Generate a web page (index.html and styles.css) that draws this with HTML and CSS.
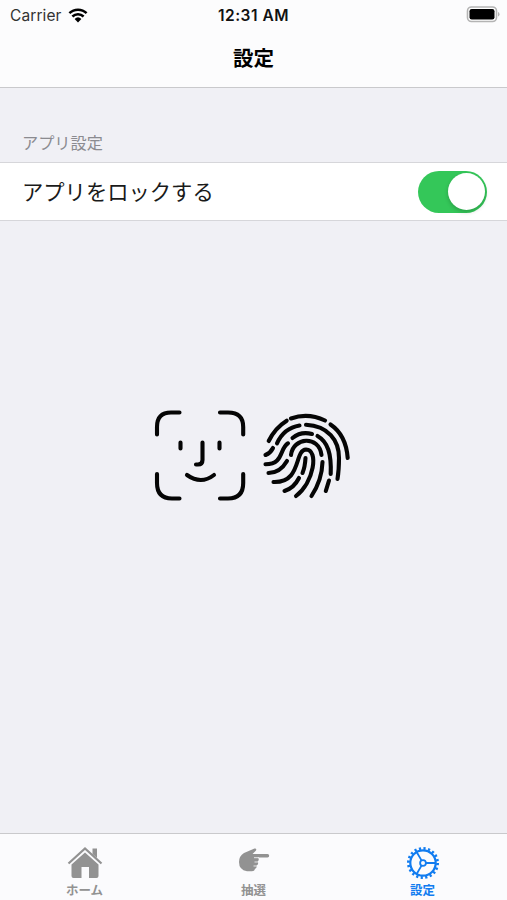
FILE: index.html
```html
<!DOCTYPE html>
<html lang="ja">
<head>
    <meta charset="UTF-8">
    <meta name="viewport" content="width=device-width, initial-scale=1.0">
    <title>設定</title>
    <link rel="stylesheet" href="styles.css">
</head>
<body>
    <header class="header">
        <div class="status-bar">
            <div class="carrier">
                <span>Carrier</span>
                <svg class="wifi" viewBox="0 0 20 15">
                    <path d="M1.4 5.2a12.4 12.4 0 0 1 17.2 0M4.4 8.5a8 8 0 0 1 11.2 0" fill="none" stroke="#000" stroke-width="2.5"/>
                    <path d="M6.6 10.9a5 5 0 0 1 6.8 0L10 14.4z"/>
                </svg>
            </div>
            <div class="time">12:31 AM</div>
            <svg class="battery" viewBox="0 0 34 17">
                <rect x="1.5" y="1" width="29" height="14.5" rx="4" fill="#fff" stroke="#b4b4b4" stroke-width="1.6"/>
                <rect x="3.5" y="3" width="25" height="10.5" rx="2.2"/>
                <path d="M32 6v4.5q1.5-.6 1.5-2.25t-1.5-2.25" fill="#b4b4b4"/>
            </svg>
        </div>
        <h1 class="title">設定</h1>
    </header>

    <main class="content">
        <h2 class="section-title">アプリ設定</h2>
        <div class="row">
            <span class="row-label">アプリをロックする</span>
            <div class="toggle"><div class="knob"></div></div>
        </div>

        <div class="biometrics">
            <svg class="face" viewBox="0 0 92 92">
                <path d="M3 24.5V17Q3 2.5 17 2.5h8.5M66 2.5h8q15.200 0 15.200 14.5v7.5M3 64v9q0 15.5 15 15.5h7.5M66 88.5h8q15.200 0 15.200-15.5v-9"/>
                <path d="M26.5 32.5v6M65.5 32.5v6M48.5 32.5V50q0 4.5-4.5 4.5h-2M33 65q14 10 27 0"/>
            </svg>
            <svg class="finger" viewBox="262 412 90 88">
                <path d="M268.7 441Q275 428 286.7 420.7"/>
                <path d="M291 418.5Q308 412.5 325 420.5"/>
                <path d="M330.5 424.5Q346 435 347.7 458"/>
                <path d="M277 443.3Q284 428 299.5 425.5"/>
                <path d="M306 424.8C328 426 339 440 339 458Q339 470 337.5 479"/>
                <path d="M292.5 438Q301 431 312 434"/>
                <path d="M317.5 436C328 442 331.5 454 330.7 474"/>
                <path d="M273 448Q270.5 453 265.5 455"/>
                <path d="M265.5 464.3C284 464 279 449 288 443.3"/>
                <path d="M268.5 473Q280 473 287 461"/>
                <path d="M291 455C293 437 319 435 321.5 455"/>
                <path d="M273.5 482C302 483 294 450 306 449.5C319 450 314 482 296 496"/>
                <path d="M284.5 491Q294 488 299 478"/>
                <path d="M305.5 458Q305 467 302.5 473"/>
                <path d="M322.5 462Q322 480 311.5 496"/>
                <path d="M329 480.5L325.8 491"/>
            </svg>
        </div>
    </main>

    <nav class="tab-bar">
        <a class="tab">
            <svg class="tab-icon" viewBox="0 0 36 34">
                <path d="M1.5 18.5L18 3.5l16.5 15" fill="none" stroke="currentColor" stroke-width="2.2"/>
                <path d="M25.5 3.5h4.5v9.5l-4.5-4zM4.5 19.5L18 7.5l13.5 12V31q0 2-2 2H22V22h-7.5v11h-8q-2 0-2-2z" fill="currentColor"/>
            </svg>
            <span>ホーム</span>
        </a>
        <a class="tab">
            <svg class="tab-icon" viewBox="0 0 36 34">
                <path d="M3 17Q3 11 8 8l10.5-4.5q2.5-.3 1.5 2L16.5 9h15q1.700.2 1.700 1.700t-1.700 1.800H22q1.700 2.5-.3 4 1.300 2.5-1 4 .5 2.5-1.700 3.500-.5 2.200-3 2.200H11Q3 25 3 17z" fill="currentColor"/>
                <path d="M18 12.7h5M18.5 17h3.5M17.5 21h3.5" fill="none" stroke="#fbfbfd" stroke-width=".8"/>
            </svg>
            <span>抽選</span>
        </a>
        <a class="tab active">
            <svg class="tab-icon" viewBox="0 0 36 34">
                <g fill="none" stroke="currentColor">
                    <circle cx="18" cy="18" r="12.7" stroke-width="2.2"/>
                    <circle cx="18" cy="18" r="14.6" stroke-width="2.8" stroke-dasharray="2.2 2.387"/>
                    <circle cx="18" cy="18" r="2.9" stroke-width="1.8"/>
                    <path d="M21 18h10M16.500 15.400l-5-8.700M16.500 20.600l-5 8.700" stroke-width="1.8"/>
                </g>
            </svg>
            <span>設定</span>
        </a>
    </nav>
</body>
</html>
```

FILE: styles.css
```css
* {
    box-sizing: border-box;
}
body {
    margin: 0;
    height: 900px;
    display: flex;
    flex-direction: column;
    overflow: hidden;
    background: #f0f0f5;
    color: #000;
    font-family: Inter, "Noto Sans CJK JP", sans-serif;
}
.header {
    height: 88px;
    background: #fcfcfd;
    border-bottom: 1px solid #c9c9cc;
}
.status-bar {
    display: grid;
    grid-template-columns: 1fr auto 1fr;
    align-items: center;
    height: 30px;
    padding: 0 7px 0 10px;
    font-size: 15.5px;
}
.carrier {
    display: flex;
    align-items: center;
    gap: 6px;
    color: #333;
    letter-spacing: 0.1px;
}
.wifi {
    width: 20px;
    height: 15px;
}
.time {
    margin-right: 3px;
    font-weight: 600;
    letter-spacing: 0.5px;
    color: #111;
}
.battery {
    width: 34px;
    height: 17px;
    margin-bottom: 2px;
    justify-self: end;
}
.title {
    margin: 14px 0 0;
    font-size: 20.5px;
    line-height: 30px;
    font-weight: 700;
    text-align: center;
}
.content {
    flex: 1;
}
.section-title {
    margin: 0;
    padding: 43px 22px 7px;
    font-size: 16.2px;
    line-height: 24px;
    font-weight: 400;
    color: #8b8b90;
}
.row {
    display: flex;
    align-items: center;
    justify-content: space-between;
    height: 59px;
    padding: 0 20px 0 22px;
    background: #fff;
    border-top: 1px solid #d6d6da;
    border-bottom: 1px solid #d6d6da;
}
.row-label {
    margin-bottom: 2px;
    font-size: 21.3px;
    color: #1a1a1a;
}
.toggle {
    display: flex;
    justify-content: flex-end;
    width: 69px;
    height: 42px;
    padding: 2.5px;
    border-radius: 21px;
    background: #34c759;
}
.knob {
    width: 37px;
    height: 37px;
    border-radius: 50%;
    background: #fff;
    box-shadow: 0 2px 4px rgba(0, 0, 0, 0.2);
}
.biometrics {
    display: flex;
    gap: 16px;
    padding: 189px 0 0 154px;
}
.biometrics svg {
    fill: none;
    stroke: #050505;
    stroke-width: 4.1;
    stroke-linecap: round;
    stroke-linejoin: round;
}
.face {
    width: 92px;
    height: 92px;
}
.finger {
    width: 90px;
    height: 88px;
    margin-top: 2px;
}
.tab-bar {
    display: flex;
    height: 67px;
    background: #fbfbfd;
    border-top: 1px solid #c9c9cc;
}
.tab {
    flex: 1;
    display: flex;
    flex-direction: column;
    align-items: center;
    padding-top: 11px;
    color: #929292;
    font-size: 12.5px;
    line-height: 18px;
    font-weight: 600;
}
.tab-icon {
    width: 36px;
    height: 34px;
    margin-bottom: 3px;
}
.active {
    color: #117cf0;
}
```
